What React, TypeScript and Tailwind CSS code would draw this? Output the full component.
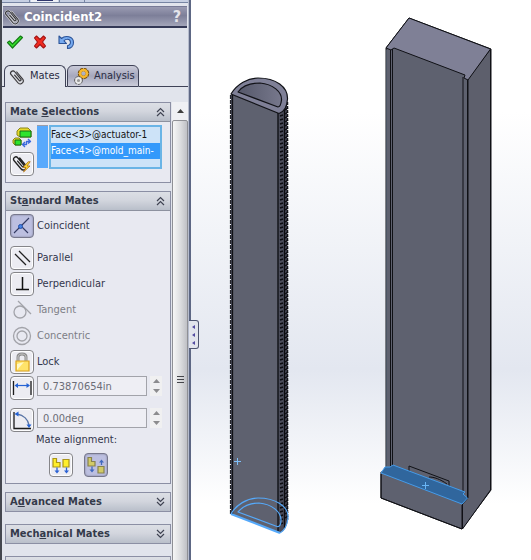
import type { ReactNode } from "react";
import { clsx } from "clsx";

const beads = Array.from({ length: 103 }, (_, i) => i * 4);

const clipPath = "M11 5 V14 a3 3 0 0 1 -6 0 V3.500 a2.300 2.300 0 0 1 4.600 0 V13 a1 1 0 0 1 -2.200 0 V6";

function PaperClip({ className }: { className?: string }) {
    return (
        <svg viewBox="0 0 16 18" className={clsx("shrink-0", className)} fill="none" strokeLinecap="round">
            <g transform="rotate(-40 8 9)">
                <path d={clipPath} stroke="#d9d9dc" strokeWidth="2.200" />
                <path d={clipPath} stroke="#35353a" strokeWidth="1.100" />
            </g>
        </svg>
    );
}

function Chevrons({ open }: { open: boolean }) {
    return (
        <svg viewBox="0 0 9 10" className={clsx("w-[9px] h-[10px]", !open && "rotate-180")} fill="none" stroke="#3f4352" strokeWidth="1.200">
            <path d="M1 5 L4.500 1.500 L8 5 M1 9 L4.500 5.500 L8 9" />
        </svg>
    );
}

function Group({ title, open = false, children }: { title?: ReactNode; open?: boolean; children?: ReactNode }) {
    return (
        <section className="border border-[#8b8fa4] bg-[#e8e9f1]">
            <button
                type="button"
                aria-expanded={open}
                className={clsx(
                    "flex w-full items-center justify-between bg-linear-to-b from-[#dcdfe5] via-[#d3d6de] via-45% to-[#b9bfca] pr-[5px] pl-1 font-bold text-[#343a4a]",
                    open ? "h-[19px] border-b border-[#8d919f]" : "h-[18px]",
                )}
            >
                <span className="whitespace-nowrap">{title}</span>
                <Chevrons open={open} />
            </button>
            {children}
        </section>
    );
}

function IconButton({ label, pressed = false, flat = false, children }: { label: string; pressed?: boolean; flat?: boolean; children: ReactNode }) {
    return (
        <button
            type="button"
            aria-label={label}
            aria-pressed={pressed}
            disabled={flat}
            className={clsx(
                "flex size-6 shrink-0 items-center justify-center rounded-[4px]",
                !flat && "border",
                !flat && (pressed ? "border-[#77788c] bg-[#bcbfe0] shadow-[inset_0_0_2px_#77788c]" : "border-[#858589] bg-[#ececf2] shadow-[inset_0_0_1px_1px_#fff]"),
            )}
        >
            <svg viewBox="0 0 20 20" className="size-5 shrink-0" fill="none">{children}</svg>
        </button>
    );
}

function MateRow({ label, pressed, flat, children }: { label: string; pressed?: boolean; flat?: boolean; children: ReactNode }) {
    return (
        <div className="flex h-6 items-center gap-[3px]">
            <IconButton label={label} pressed={pressed} flat={flat}>{children}</IconButton>
            <span className={flat ? "text-[#7d7e86]" : "text-[#33374d]"}>{label}</span>
        </div>
    );
}

function NumberRow({ label, value, children }: { label: string; value: string; children: ReactNode }) {
    return (
        <div className="flex h-6 items-start gap-[3px]">
            <IconButton label={label}>{children}</IconButton>
            <input
                aria-label={label}
                defaultValue={value}
                className="h-5 w-full min-w-0 border border-[#a2a3aa] bg-[#eeeef4] pl-[5px] text-[#6b6d77] outline-none"
            />
            <div className="flex h-5 w-3 shrink-0 flex-col bg-[#f0f0f1]">
                <button type="button" aria-label={`Increase ${label}`} className="flex flex-1 items-center justify-center">
                    <svg viewBox="0 0 7 4" className="h-1 w-[7px]" fill="#8c8c8e"><path d="M3.500 0 L7 4 H0 Z" /></svg>
                </button>
                <button type="button" aria-label={`Decrease ${label}`} className="flex flex-1 items-center justify-center">
                    <svg viewBox="0 0 7 4" className="h-1 w-[7px]" fill="#8c8c8e"><path d="M3.500 4 L7 0 H0 Z" /></svg>
                </button>
            </div>
        </div>
    );
}

function Toolbar() {
    return (
        <div className="flex items-center gap-2 px-1 pt-[6px]">
            <button type="button" aria-label="OK">
                <svg viewBox="0 0 18 16" className="h-4 w-[18px]">
                    <path d="M1.500 8.500 L3.500 7 L6.500 10 L14.500 2 L16.500 3.500 L6.500 14 Z" fill="#35e52d" stroke="#167b16" strokeWidth="1.200" strokeLinejoin="round" />
                </svg>
            </button>
            <button type="button" aria-label="Cancel">
                <svg viewBox="0 0 18 16" className="h-4 w-[18px]">
                    <path d="M2.500 4 L4.500 2 L8 5.500 L11.500 2 L13.500 4 L10.500 8 L13.500 12 L11.500 14 L8 10.500 L4.500 14 L2.500 12 L5.500 8 Z" fill="#f02b20" stroke="#a51414" strokeWidth="1.100" strokeLinejoin="round" />
                </svg>
            </button>
            <button type="button" aria-label="Undo">
                <svg viewBox="0 0 18 16" className="h-4 w-[18px]">
                    <path d="M1 2 L3.500 4.500 C7 1 15.500 2 15.500 8.500 C15.500 12 13 14.500 9.500 14.500 V11.800 C14 10.500 13 5 9 5.200 C7.800 5.200 6.800 5.800 6 6.800 L8.500 9.500 H1 Z" fill="#76aaf0" stroke="#2b5398" strokeWidth="1.100" strokeLinejoin="round" />
                </svg>
            </button>
        </div>
    );
}

function Tabs() {
    return (
        <div role="tablist" className="mt-[15px] flex h-[22px] text-[#2a2d44]">
            <div className="w-[2px] border-b border-[#3f4257]" />
            <button type="button" role="tab" aria-selected="true" className="flex w-[62px] items-center gap-[5px] rounded-t-[6px] border border-b-0 border-[#3f4257] pl-1">
                <PaperClip className="h-[18px] w-4" />
                Mates
            </button>
            <div className="w-px border-b border-[#3f4257]" />
            <button type="button" role="tab" aria-selected="false" className="flex w-[72px] items-center gap-[4px] rounded-t-[6px] border border-[#3f4257] bg-linear-to-b from-[#c9cad8] via-[#a6a8bd] to-[#cccdda] pl-[6px]">
                <svg viewBox="0 0 16 17" className="h-[17px] w-4 shrink-0">
                    <circle cx="9.500" cy="5.500" r="4" fill="none" stroke="#7c5208" strokeWidth="3.500" strokeDasharray="2.500 .6" />
                    <circle cx="9.500" cy="5.500" r="3.500" fill="none" stroke="#f8b72b" strokeWidth="2.500" />
                    <circle cx="4.500" cy="12.500" r="2.700" fill="none" stroke="#555" strokeWidth="3.200" strokeDasharray="2 .5" />
                    <circle cx="4.500" cy="12.500" r="2.500" fill="#999" stroke="#e9e9e9" strokeWidth="1.800" />
                </svg>
                Analysis
            </button>
            <div className="flex-1 border-b border-[#3f4257]" />
        </div>
    );
}

function MateSelections() {
    return (
        <div className="flex gap-[3px] pt-[3px] pr-2 pb-[6px] pl-1">
            <div className="flex w-6 flex-col gap-[3px]">
                <svg viewBox="0 0 24 24" className="size-6" strokeLinejoin="round">
                    <path d="M7 6 L10 3 H18 L21 6 V12 H10 L7 10 Z" fill="#e6d92a" stroke="#8b861b" />
                    <path d="M10 6 H21 V12 H10 Z" fill="#2ee32d" stroke="#176d17" />
                    <path d="M3 15 L5 13 H9 L11 15 V20 H5 L3 18 Z" fill="#e6d92a" stroke="#8b861b" />
                    <path d="M5 15 H11 V20 H5 Z" fill="#2ee32d" stroke="#176d17" />
                    <path d="M12.500 19.500 H16.500 V16.500 H20 M15 17 L12.500 19.500 L15 22 M18 14 L20.500 16.500 L18 18.500" fill="none" stroke="#3a68db" strokeWidth="1.400" />
                </svg>
                <IconButton label="Multiple mate mode">
                    <g strokeLinecap="round">
                        <g transform="rotate(-40 8 9)">
                            <path d={clipPath} stroke="#222" strokeWidth="1.300" />
                        </g>
                        <path d="M16 8 L11 13.500 H14 L11.500 18 L18 12 H15 L18 8 Z" fill="#ffdc35" stroke="#b06d12" strokeWidth=".8" />
                    </g>
                </IconButton>
            </div>
            <div className="flex min-w-0 flex-1">
                <div className="h-[43px] w-[11px] shrink-0 border-t border-[#9a9ca8] bg-[#58a9fc]" />
                <ul role="listbox" aria-label="Mate selections" className="ml-px h-11 min-w-0 flex-1 overflow-hidden border-2 border-[#6ab4e6] bg-[#cde3f8] text-[10px] leading-4 whitespace-nowrap">
                    <li role="option" aria-selected="false" className="text-[#151515]">Face&lt;3&gt;@actuator-1</li>
                    <li role="option" aria-selected="true" className="bg-[#3399fb] text-white">Face&lt;4&gt;@mold_main-</li>
                </ul>
            </div>
        </div>
    );
}

function StandardMates() {
    return (
        <div className="flex flex-col gap-[2px] pt-[3px] pr-2 pb-[6px] pl-1">
            <MateRow label="Coincident" pressed>
                <path d="M9 10 L17 2 M9 10 L2 17 M9 10 L16 17" stroke="#333a62" strokeWidth="1.100" />
                <circle cx="8.500" cy="10.500" r="2" fill="#4582e4" stroke="#2451aa" />
            </MateRow>
            <div className="h-1" />
            <MateRow label="Parallel">
                <path d="M3 6 L14 17 M7 3 L18 14" stroke="#222" strokeWidth="1.300" />
            </MateRow>
            <MateRow label="Perpendicular">
                <path d="M10.500 3 V15 M4 15.500 H17" stroke="#111" strokeWidth="1.500" />
            </MateRow>
            <MateRow label="Tangent" flat>
                <circle cx="8" cy="12" r="6" stroke="#a2a3a9" strokeWidth="1.300" />
                <path d="M6 1 L19 14" stroke="#a2a3a9" strokeWidth="1.300" />
            </MateRow>
            <MateRow label="Concentric" flat>
                <circle cx="10" cy="10" r="8.500" stroke="#a2a3a9" strokeWidth="1.300" />
                <circle cx="10" cy="10" r="5" stroke="#a2a3a9" strokeWidth="1.300" />
            </MateRow>
            <MateRow label="Lock">
                <path d="M6 9 V5 C6 1 14 1 14 5 V9" stroke="#8c8c8c" strokeWidth="3" />
                <path d="M6 9 V5 C6 1 14 1 14 5 V9" stroke="#c8c8c8" />
                <path d="M4 9 H17 V19 H4 Z" fill="#ffe36a" stroke="#dba21b" strokeWidth="1.200" />
                <path d="M5 18 V12 L12 10 Z" fill="#fff8c7" />
            </MateRow>
            <NumberRow label="Distance" value="0.73870654in">
                <path d="M1.500 3 V17 M19 3 V17" stroke="#1b1b1b" strokeWidth="1.300" />
                <path d="M4 7.500 H17" stroke="#2462d4" strokeWidth="1.200" />
                <path d="M2.500 7.500 L6 5 V10 Z M18 7.500 L14.500 5 V10 Z" fill="#2462d4" />
            </NumberRow>
            <div className="h-1" />
            <NumberRow label="Angle" value="0.00deg">
                <path d="M2 2 V18.500 H19" stroke="#1b1b1b" strokeWidth="1.300" />
                <path d="M5 4 C12 5 16 10 17 15" stroke="#5874a6" strokeWidth="1.300" />
                <path d="M2.500 4 L6.500 1.500 V6.500 Z M17 18 L14.500 14.500 H19.500 Z" fill="#2462d4" />
            </NumberRow>
            <span className="pl-[26px] leading-3 text-[#33374d]">Mate alignment:</span>
            <div className="flex gap-[11px] pt-[5px] pl-[39px]">
                <IconButton label="Aligned">
                    <path d="M2 3.500 H5.500 V7.500 H9 V12 H2 Z M12 4.500 H18 V12 H12 Z" fill="#ffee2b" stroke="#aa951b" strokeWidth="1.200" />
                    <path d="M6 12.500 V17 M15.500 12.500 V17" stroke="#2b62d4" strokeWidth="1.300" />
                    <path d="M3.500 15.500 H8.500 L6 18.500 Z M13 15.500 H18 L15.500 18.500 Z" fill="#2b62d4" />
                </IconButton>
                <IconButton label="Anti-aligned" pressed>
                    <path d="M2 2.500 H5.500 V6.500 H9 V11 H2 Z M12 11.500 H18 V18 H12 Z" fill="#d2cb67" stroke="#87824f" strokeWidth="1.200" />
                    <path d="M6 11.500 V16 M15.500 10 V6" stroke="#4169bd" strokeWidth="1.300" />
                    <path d="M3.500 14.500 H8.500 L6 17.500 Z M13 7.500 H18 L15.500 4.500 Z" fill="#4169bd" />
                </IconButton>
            </div>
        </div>
    );
}

function ScrollBar() {
    return (
        <div className="ml-px flex w-4 flex-col bg-[#eff0f4]">
            <button type="button" aria-label="Scroll up" className="flex h-[18px] shrink-0 items-center justify-center">
                <svg viewBox="0 0 7 4" className="h-1 w-[7px]" fill="#3f3f3f"><path d="M3.500 0 L7 4 H0 Z" /></svg>
            </button>
            <div className="flex h-[518px] shrink-0 flex-col items-center justify-center gap-[2px] rounded-[2px] border border-[#8f9095] bg-linear-to-r from-[#f6f6f6] via-[#dedfe1] to-[#bfc0c5]">
                <div className="h-px w-[7px] bg-[#44454a]" />
                <div className="h-px w-[7px] bg-[#44454a]" />
                <div className="h-px w-[7px] bg-[#44454a]" />
            </div>
        </div>
    );
}

function PropertyPanel() {
    return (
        <aside className="relative h-screen w-[191px] shrink-0 border-r-2 border-l-2 border-r-[#5d6784] border-l-[#44474f] bg-[#e1e4ec]">
            <div className="flex h-full flex-col overflow-hidden border-r border-[#b6bccd]">
                <div className="flex h-[3px] shrink-0 gap-px border-b border-[#7785a3] bg-[#c7d0e3]">
                    <div className="w-7 border-r border-[#7785a3]" />
                    <div className="flex w-[27px] justify-center bg-[#eef1f7]"><div className="h-px w-4 bg-[#30366c]" /></div>
                    <div className="w-[26px] border-x border-[#7785a3]" />
                </div>
                <header className="mt-[3px] mr-px ml-px flex h-[22px] shrink-0 items-center gap-1 border-t border-b-2 border-t-[#777a96] border-b-[#343956] bg-linear-to-b from-[#9a9bb2] via-[#7d7f99] via-45% to-[#a3a5b9] pl-px text-white">
                    <PaperClip className="h-[18px] w-4" />
                    <h1 className="text-[13px] font-bold">Coincident2</h1>
                    <button type="button" aria-label="Help" className="mr-[6px] ml-auto text-base leading-none font-bold text-[#e4e4ea]">?</button>
                </header>
                <Toolbar />
                <Tabs />
                <div className="mt-[15px] ml-[3px] flex min-h-0 flex-1 overflow-hidden">
                    <div className="flex min-w-0 flex-1 flex-col gap-3">
                        <div className="flex flex-col gap-2">
                            <Group title={<>Mate <u>S</u>elections</>} open><MateSelections /></Group>
                            <Group title={<>St<u>a</u>ndard Mates</>} open><StandardMates /></Group>
                            <Group title={<>A<u>d</u>vanced Mates</>} />
                        </div>
                        <Group title={<>Mech<u>a</u>nical Mates</>} />
                        <Group />
                    </div>
                    <ScrollBar />
                </div>
            </div>
            <button type="button" aria-label="Hide panel" className="absolute top-[320px] left-[187px] flex h-[29px] w-[10px] flex-col items-center justify-center gap-1 rounded-r-[3px] border border-l-0 border-[#4d5470] bg-[#e1e4ec]">
                {[0, 1, 2].map((i) => (
                    <svg key={i} viewBox="0 0 3 4" className="h-1 w-[3px]" fill="#514aa0"><path d="M3 0 V4 L0 2 Z" /></svg>
                ))}
            </button>
        </aside>
    );
}

function Actuator() {
    return (
        <g strokeLinejoin="round">
            <path d="M231 94 L279 113 L287 99 L288 519 Q287 530 280 533 L231 514 Z" fill="#4a4c5a" />
            <path d="M232 95 L278 113 V532 L232 514 Z" fill="#5e616f" />
            <path d="M278 113 V531" stroke="#15161b" strokeWidth="1.500" />
            <path d="M232.500 95 V514" stroke="#111217" strokeWidth="1.300" />
            <path d="M230.500 95 V514" stroke="#25262d" strokeWidth="1.200" strokeDasharray="4 1" />
            <path d="M284.500 106 V528" stroke="#0c0c10" strokeWidth="1.300" />
            <path d="M287.500 102 V520" stroke="#15161b" strokeWidth="1.500" strokeDasharray="3 1" />
            {beads.map((y) => (
                <path key={y} d={`M280 ${y + 116} L283 ${y + 115} M285 ${y + 110} L288 ${y + 108}`} stroke="#0c0c10" strokeWidth="1.500" />
            ))}
            <path d="M231 94 C237 84 248 78 258 78 C276 78 288 87 287.500 99 C287 107 284 112 279 113.500 Z" fill="#7f8097" stroke="#111217" strokeWidth="1.200" />
            <path d="M238 92 C243 85 252 83 260 83 C273 84 282 92 281.500 100 C281 104 280 107 278 107 Z" fill="url(#bore)" stroke="#111217" strokeWidth="1.200" />
            <g fill="none" stroke="#55a9fa" strokeWidth="1.200">
                <path d="M231 514 C236 505 247 498 258 498 C275 498 289 506 288 518 C287 526 284 531 280 533" />
                <path d="M231 514 L280 533" strokeWidth="2" />
                <path d="M238 512 C243 506 251 503 259 503 C272 504 281 512 281 520 C281 524 280 527 277 526.500 Z" />
            </g>
            <path d="M234 461.500 H241 M237.500 458 V465" stroke="#7fc0fa" />
        </g>
    );
}

function Mold() {
    return (
        <g strokeLinejoin="round" stroke="#101116">
            <path d="M386 48 V472 H381 V498 L462 529 L491 490 V49 L409 18 Z" fill="#5e616f" />
            <path d="M468 79 L490.500 49 V490 L462.500 529 V504 L468 498 Z" fill="#5d5f6c" />
            <path d="M386 48 L409 18 L490.500 49 L468 80 L464 78 L465 75 L394 48 L391 50 Z" fill="#7f8096" />
            <path d="M386.500 50 V468" stroke="#4b5563" />
            <path d="M390.500 50 V467 M392.500 49 V466 M463 77 V492 M467.500 80 V498" />
            <path d="M409 471 V466 L449 481 V486 M429 477 C434 477 440 479 447 484" fill="none" />
            <path d="M381 473 L385 467 H390 L393 465 L465 492 L463 494 L467.500 498 L462 504 Z" fill="#30669d" stroke="#459be9" />
            <path d="M422 485.500 H429 M425.500 482 V489" stroke="#69b5f5" />
            <path d="M381 474 V498 L462 529 V505" fill="none" />
        </g>
    );
}

export default function App() {
    return (
        <div className="flex min-h-screen overflow-hidden bg-white font-['DejaVu_Sans_Condensed','DejaVu_Sans',sans-serif] text-[11px] [font-stretch:condensed]">
            <PropertyPanel />
            <main className="min-w-0 flex-1 bg-linear-to-b from-white from-20% via-[#e3e7f0] via-66% to-white to-90%">
                <svg viewBox="191 0 340 560" className="w-full" role="img" aria-label="Actuator and mold assembly">
                    <defs>
                        <linearGradient id="bore" x1="0" x2="1">
                            <stop offset="0" stopColor="#55586a" />
                            <stop offset="1" stopColor="#77788c" />
                        </linearGradient>
                    </defs>
                    <Actuator />
                    <Mold />
                </svg>
            </main>
        </div>
    );
}
